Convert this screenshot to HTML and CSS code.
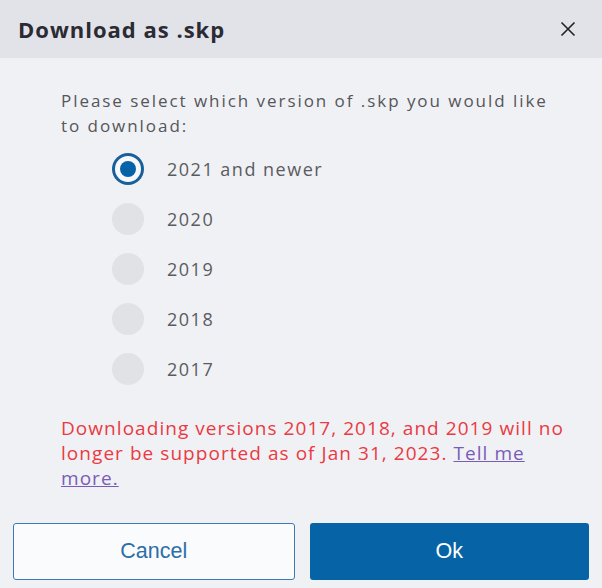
FILE: index.html
```html
<!DOCTYPE html>
<html lang="en">
<head>
<meta charset="utf-8">
<title>Download as .skp</title>
<link rel="stylesheet" href="styles.css">
</head>
<body>
<div class="dialog">
  <header class="head">
    <h1 class="title">Download as .skp</h1>
    <button class="close" aria-label="Close">
      <svg width="16" height="16" viewBox="0 0 16 16"><path d="M1.5 1.5 L14.5 14.5 M14.5 1.5 L1.5 14.5" stroke="#222" stroke-width="1.6" fill="none"/></svg>
    </button>
  </header>
  <main class="body">
    <p class="intro">Please select which version of .skp you would like to download:</p>
    <ul class="options">
      <li class="option"><span class="radio checked"></span><span class="label">2021 and newer</span></li>
      <li class="option"><span class="radio"></span><span class="label">2020</span></li>
      <li class="option"><span class="radio"></span><span class="label">2019</span></li>
      <li class="option"><span class="radio"></span><span class="label">2018</span></li>
      <li class="option"><span class="radio"></span><span class="label">2017</span></li>
    </ul>
    <p class="warning">Downloading versions 2017, 2018, and 2019 will no longer be supported as of Jan 31, 2023. <a href="#" class="more">Tell me more.</a></p>
  </main>
  <footer class="actions">
    <button class="btn cancel">Cancel</button>
    <button class="btn ok">Ok</button>
  </footer>
</div>
</body>
</html>
```
FILE: styles.css
```css
html, body {
  margin: 0;
  padding: 0;
  background: #f0f1f5;
}
body {
  width: 602px;
  height: 588px;
  overflow: hidden;
  font-family: "Open Sans", "Noto Sans", sans-serif;
}
.dialog {
  display: flex;
  flex-direction: column;
  height: 588px;
}
.head {
  height: 58px;
  background: #e2e3e8;
  display: flex;
  align-items: center;
  justify-content: space-between;
  padding: 0 26px 0 18px;
}
.title {
  margin: 0;
  font-size: 22px;
  font-weight: 700;
  color: #2b2b33;
  letter-spacing: 1px;
}
.close {
  border: 0;
  background: none;
  padding: 0;
  width: 16px;
  height: 16px;
  display: flex;
}
.body {
  padding: 30px 31px 0 61px;
  flex: 1;
}
.intro {
  margin: 0;
  font-size: 17px;
  line-height: 25px;
  color: #555659;
  letter-spacing: 1.95px;
}
.options {
  list-style: none;
  margin: 15px 0 0 51px;
  padding: 0;
  display: flex;
  flex-direction: column;
  gap: 18px;
}
.option {
  display: flex;
  align-items: center;
  height: 32px;
}
.radio {
  width: 32px;
  height: 32px;
  border-radius: 50%;
  background: #e1e2e6;
  box-sizing: border-box;
  flex: none;
}
.radio.checked {
  background: #f7f8fa;
  border: 3px solid #19609b;
  display: flex;
  align-items: center;
  justify-content: center;
}
.radio.checked::after {
  content: "";
  width: 16px;
  height: 16px;
  border-radius: 50%;
  background: #0763a8;
}
.label {
  margin-left: 23px;
  font-size: 18px;
  color: #5a5b60;
  letter-spacing: 1.5px;
}
.warning {
  margin: 31px 0 0 0;
  font-size: 19px;
  line-height: 25px;
  color: #ea3a42;
  letter-spacing: 1.05px;
}
.more {
  color: #7a5cb8;
  text-decoration: underline;
}
.actions {
  display: flex;
  gap: 15px;
  padding: 0 13px 8px 13px;
}
.btn {
  flex: 1;
  height: 57px;
  border-radius: 3px;
  font-family: "Liberation Sans", Arial, sans-serif;
  font-size: 21.5px;
  box-sizing: border-box;
}
.cancel {
  background: #fafbfc;
  border: 1.5px solid #3a7bb5;
  color: #2c6ea8;
}
.ok {
  background: #0563a6;
  border: 0;
  color: #ffffff;
}
```
